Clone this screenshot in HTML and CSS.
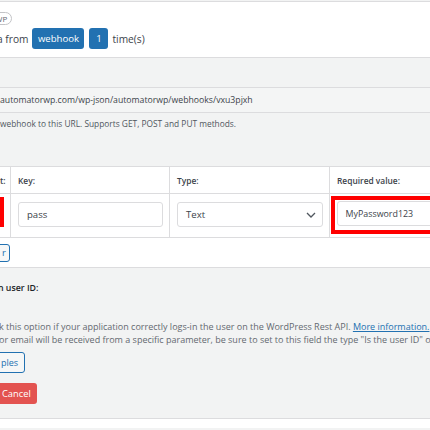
FILE: index.html
```html
<!DOCTYPE html>
<html>
<head>
<meta charset="utf-8">
<link rel="stylesheet" href="styles.css">
</head>
<body>
<div class="page">
  <div class="top-panel">
    <div class="badge-row"><span class="badge">WP</span></div>
    <div class="trigger-row">
      <span class="trigger-text">a from</span>
      <span class="tag tag-wide">webhook</span>
      <span class="tag tag-num">1</span>
      <span class="trigger-text">time(s)</span>
    </div>
  </div>

  <div class="url-field">automatorwp.com/wp-json/automatorwp/webhooks/vxu3pjxh</div>
  <p class="desc url-desc">webhook to this URL. Supports GET, POST and PUT methods.</p>

  <div class="params">
    <div class="grid">
      <div class="cell head c1"><span class="cut-label">t:</span></div>
      <div class="cell head c2">Key:</div>
      <div class="cell head c3">Type:</div>
      <div class="cell head c4">Required value:</div>

      <div class="cell body c1"><div class="red-edge"></div></div>
      <div class="cell body c2"><div class="input">pass</div></div>
      <div class="cell body c3">
        <div class="input select">Text
          <svg class="chev" width="10" height="6" viewBox="0 0 10 6"><path d="M1 1l4 4 4-4" fill="none" stroke="#50575e" stroke-width="1.3"/></svg>
        </div>
      </div>
      <div class="cell body c4">
        <div class="red-box"><div class="input pw">MyPassword123</div></div>
      </div>
    </div>
    <div class="params-foot"><span class="btn-outline add-btn">r</span></div>
  </div>

  <div class="user-label">n user ID:</div>
  <p class="desc help help1">k this option if your application correctly logs-in the user on the WordPress Rest API. <a href="#">More information.</a></p>
  <p class="desc help">or email will be received from a specific parameter, be sure to set to this field the type "Is the user ID" o</p>

  <div class="btn-line"><span class="btn-outline ex-btn">ples</span></div>
  <div class="btn-line"><span class="btn-cancel">Cancel</span></div>

  <div class="bottom-panel"></div>
</div>
</body>
</html>
```

FILE: styles.css
```css
* { box-sizing: border-box; }
html, body { margin: 0; padding: 0; }
body {
  background: #f2f3f3;
  font-family: "Open Sans", "Noto Sans", sans-serif;
  color: #3c434a;
  overflow: hidden;
}
.page {
  width: 430px;
  height: 430px;
  overflow: hidden;
  padding-top: 1px;
}
.top-panel {
  background: #fff;
  border-top: 1px solid #dcdcde;
  border-bottom: 1px solid #dcdcde;
  height: 57px;
  padding-top: 10px;
}
.badge-row { height: 13px; display: flex; }
.badge {
  margin-left: -12px;
  height: 13px;
  border: 1px solid #c3c4c7;
  border-radius: 7px;
  font-size: 8px;
  line-height: 11px;
  padding: 0 4px 0 6px;
  color: #646970;
}
.trigger-row {
  display: flex;
  align-items: center;
  margin-top: 3px;
  margin-left: -3px;
  height: 21px;
  font-size: 10.2px;
}
.trigger-text { color: #3c434a; }
.tag {
  background: #2271b1;
  color: #fff;
  border-radius: 3px;
  height: 21px;
  line-height: 21px;
  text-align: center;
  font-size: 9.6px;
}
.tag-wide { width: 52px; margin-left: 4px; }
.tag-num { width: 19px; margin-left: 5px; margin-right: 4px; }

.url-field {
  margin-top: 29px;
  height: 26px;
  border-top: 1px solid #dcdcde;
  border-bottom: 1px solid #dcdcde;
  background: #f4f5f5;
  font-size: 8.7px;
  line-height: 24px;
  color: #3c434a;
  white-space: nowrap;
}
.desc {
  margin: 0;
  font-size: 8.35px;
  color: #50575e;
  white-space: nowrap;
}
.url-desc { margin-top: 5px; line-height: 12px; }

.params {
  margin-top: 36px;
  width: 560px;
  background: #fff;
  border-top: 1px solid #dcdcde;
  border-bottom: 1px solid #dcdcde;
}
.grid {
  display: grid;
  grid-template-columns: 11px 159px 160px 230px;
}
.cell {
  border-right: 1px solid #dcdcde;
  border-bottom: 1px solid #dcdcde;
}
.cell.c4 { border-right: none; }
.head {
  height: 27px;
  font-size: 8.4px;
  font-weight: 600;
  color: #3c434a;
  padding: 8px 0 0 7px;
  white-space: nowrap;
}
.head.c1 { padding: 8px 0 0 0; text-align: right; overflow: hidden; }
.cut-label { display: inline-block; margin-right: 6px; }
.body { height: 44px; }
.body.c1 { padding-top: 3px; }
.red-edge { width: 4px; height: 30px; background: #ff0000; }
.body.c2 { padding: 8px 6px 0 7px; }
.body.c3 { padding: 8px 6px 0 7px; }
.input {
  height: 25px;
  border: 1px solid #dcdcde;
  border-radius: 3px;
  background: #fff;
  font-size: 9.6px;
  line-height: 23px;
  padding-left: 8px;
  color: #3c434a;
}
.select { position: relative; }
.chev { position: absolute; right: 6px; top: 9px; }
.body.c4 { padding: 2px 0 0 1px; }
.red-box {
  border: 4.5px solid #ff0000;
  height: 38px;
  padding: 1px 0 0 1.5px;
}
.input.pw { font-size: 8.9px; padding-left: 8px; }

.params-foot {
  height: 29px;
  padding-top: 6px;
  display: flex;
}
.btn-outline {
  display: inline-block;
  border: 1px solid #2271b1;
  border-radius: 3px;
  background: #f6f7f7;
  color: #2271b1;
  font-size: 9.5px;
  height: 18px;
  line-height: 16px;
}
.add-btn { margin-left: -5px; width: 15px; padding-left: 6px; }

.user-label {
  margin-top: 14px;
  font-size: 8.8px;
  font-weight: 600;
  color: #1d2327;
  margin-left: -2px;
  line-height: 12px;
}
.help { font-size: 9px; line-height: 13px; color: #646970; margin-left: -1px; }
.help1 { margin-top: 26px; }
.help a { color: #2271b1; text-decoration: underline; }

.btn-line { display: flex; }
.ex-btn {
  margin-top: 6px;
  margin-left: -5px;
  height: 21px;
  line-height: 19px;
  padding: 0 6px 0 5px;
  font-size: 9px;
}
.btn-cancel {
  margin-top: 10px;
  margin-left: -6px;
  height: 21px;
  line-height: 21px;
  padding: 0 6px 0 8px;
  background: #e35350;
  color: #fff;
  border-radius: 3px;
  font-size: 9.3px;
}
.bottom-panel {
  margin-top: 14px;
  height: 10px;
  background: #fff;
  border-top: 1px solid #dcdcde;
}
```
